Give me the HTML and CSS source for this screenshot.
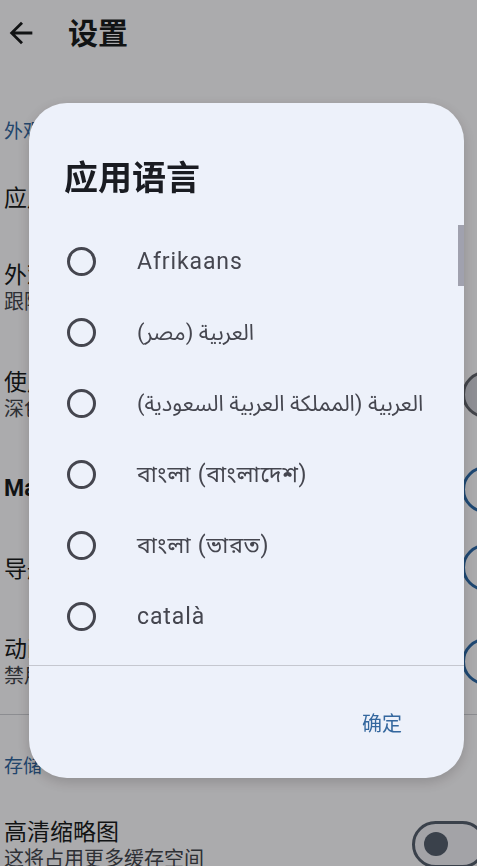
FILE: index.html
```html
<!DOCTYPE html>
<html lang="zh-CN">
<head>
<meta charset="utf-8">
<title>设置</title>
<link rel="stylesheet" href="styles.css">
</head>
<body>
<div class="screen">
  <header class="appbar">
    <svg class="back" viewBox="0 0 24 24" aria-hidden="true"><path d="M20 11H7.83l5.59-5.59L12 4l-8 8 8 8 1.41-1.41L7.83 13H20v-2z"/></svg>
    <h1 class="appbar-title">设置</h1>
  </header>

  <div class="section-head">外观</div>
  <div class="row r-lang"><div class="texts"><div class="title">应用语言</div></div></div>
  <div class="row r-theme"><div class="texts"><div class="title">外观模式</div><div class="sub">跟随系统</div></div></div>
  <div class="row r-black">
    <div class="texts"><div class="title">使用纯黑主题</div><div class="sub">深色模式下使用</div></div>
    <div class="switch switch-off-filled"></div>
  </div>
  <div class="row r-you">
    <div class="texts"><div class="title title-bold">Material You</div></div>
    <div class="switch switch-primary"></div>
  </div>
  <div class="row r-nav">
    <div class="texts"><div class="title">导航栏标签</div></div>
    <div class="switch switch-primary"></div>
  </div>
  <div class="row r-anim">
    <div class="texts"><div class="title">动画</div><div class="sub">禁用所有动画</div></div>
    <div class="switch switch-primary"></div>
  </div>
  <div class="divider"></div>
  <div class="section-head section-head-storage">存储</div>
  <div class="row r-thumb">
    <div class="texts"><div class="title">高清缩略图</div><div class="sub">这将占用更多缓存空间</div></div>
    <div class="switch switch-off switch-near"><span class="thumb"></span></div>
  </div>
</div>

<div class="scrim"></div>

<div class="dialog" role="dialog">
  <h2 class="dlg-title">应用语言</h2>
  <div class="dlg-list">
    <div class="item"><span class="radio"></span><span class="label">Afrikaans</span></div>
    <div class="item"><span class="radio"></span><span class="label label-ar" dir="rtl">العربية (مصر)</span></div>
    <div class="item"><span class="radio"></span><span class="label label-ar" dir="rtl">العربية (المملكة العربية السعودية)</span></div>
    <div class="item"><span class="radio"></span><span class="label label-bn">বাংলা (বাংলাদেশ)</span></div>
    <div class="item"><span class="radio"></span><span class="label label-bn">বাংলা (ভারত)</span></div>
    <div class="item"><span class="radio"></span><span class="label">català</span></div>
    <div class="item"><span class="radio"></span><span class="label">čeština</span></div>
    <div class="scrollbar"></div>
  </div>
  <div class="dlg-divider"></div>
  <div class="dlg-actions"><span class="text-btn">确定</span></div>
</div>
</body>
</html>
```

FILE: styles.css
```css
html, body {
  margin: 0;
  padding: 0;
}
body {
  width: 477px;
  height: 866px;
  overflow: hidden;
  background: #fdfcff;
  font-family: Roboto, "Noto Sans CJK SC", "Noto Sans", "DejaVu Sans", sans-serif;
  color: #1a1c1e;
}
.screen {
  width: 477px;
}
.appbar {
  height: 66px;
  display: flex;
  align-items: center;
}
.back {
  width: 34px;
  height: 34px;
  margin-left: 4px;
  margin-top: -1px;
  fill: #1a1c1e;
  flex: none;
}
.appbar-title {
  margin: -5px 0 0 30px;
  font-family: "Noto Sans CJK SC", sans-serif;
  font-size: 30px;
  font-weight: 700;
  line-height: 40px;
}
.section-head {
  padding: 52px 0 12px 4px;
  font-family: "Noto Sans CJK SC", sans-serif;
  font-size: 19px;
  line-height: 24px;
  color: #33679f;
}
.section-head-storage {
  padding-top: 38px;
}
.row {
  display: flex;
  align-items: center;
  justify-content: space-between;
  padding-left: 4px;
}
.texts {
  display: flex;
  flex-direction: column;
  white-space: nowrap;
}
.title {
  font-family: "Noto Sans CJK SC", sans-serif;
  font-size: 23px;
  line-height: 28px;
  color: #1a1c1e;
}
.title-bold {
  font-family: Roboto, sans-serif;
  font-weight: 700;
}
.sub {
  font-family: "Noto Sans CJK SC", sans-serif;
  font-size: 20px;
  line-height: 28px;
  color: #44474e;
}
.r-lang { height: 84px; }
.r-theme { height: 98px; }
.r-black { height: 116px; }
.r-you { height: 74px; }
.r-nav { height: 82px; }
.r-anim { height: 106px; }
.r-thumb { height: 110px; }
.divider {
  height: 1px;
  background: #cfd0d6;
}
.switch {
  flex: none;
  box-sizing: border-box;
  width: 74px;
  height: 47px;
  border-radius: 24px;
  border: 3px solid #6a6d75;
  margin-right: -59px;
  display: flex;
  align-items: center;
}
.switch-off-filled {
  background: #d2d3db;
  border-color: #62656d;
}
.switch-primary {
  background: transparent;
  border-color: #2d6aa9;
}
.switch-off {
  background: #f0f0f7;
  border-color: #56606f;
  padding-left: 9px;
}
.switch-near {
  margin-right: -9px;
}
.thumb {
  width: 24px;
  height: 24px;
  border-radius: 50%;
  background: #56606f;
}
.scrim {
  position: fixed;
  inset: 0;
  background: rgba(0, 0, 0, 0.32);
}
.dialog {
  position: fixed;
  left: 29px;
  top: 103px;
  width: 435px;
  height: 675px;
  border-radius: 38px;
  background: #edf1fa;
  box-shadow: 0 4px 14px rgba(0, 0, 0, 0.18);
  display: flex;
  flex-direction: column;
  overflow: hidden;
}
.dlg-title {
  margin: 0;
  padding: 53px 0 0 35px;
  font-family: "Noto Sans CJK SC", sans-serif;
  font-size: 34px;
  font-weight: 700;
  line-height: 40px;
  color: #1a1c22;
}
.dlg-list {
  position: relative;
  margin-top: 18px;
  height: 451px;
  box-sizing: border-box;
  padding-top: 12px;
  overflow: hidden;
  flex: none;
}
.item {
  height: 71px;
  display: flex;
  align-items: center;
  padding-left: 38px;
}
.radio {
  flex: none;
  box-sizing: border-box;
  width: 29px;
  height: 29px;
  border-radius: 50%;
  border: 3px solid #45464f;
}
.label {
  margin-left: 41px;
  font-family: Roboto, "Noto Sans Bengali", "Noto Sans Arabic", "Noto Naskh Arabic", "DejaVu Sans", sans-serif;
  font-size: 23px;
  letter-spacing: 0.9px;
  line-height: 30px;
  color: #45464f;
  white-space: nowrap;
}
.label-ar {
  letter-spacing: 0;
  font-size: 22px;
}
.label-bn {
  letter-spacing: 0.7px;
  font-size: 23px;
}
.scrollbar {
  position: absolute;
  right: 0;
  top: 11px;
  width: 6px;
  height: 61px;
  background: #a0a1ae;
}
.dlg-divider {
  height: 1px;
  background: #c5c7cf;
  flex: none;
}
.dlg-actions {
  flex: 1;
  display: flex;
  justify-content: flex-end;
  align-items: center;
  padding: 2px 62px 0 0;
}
.text-btn {
  font-family: "Noto Sans CJK SC", sans-serif;
  font-size: 20px;
  line-height: 24px;
  color: #34679e;
}
```
